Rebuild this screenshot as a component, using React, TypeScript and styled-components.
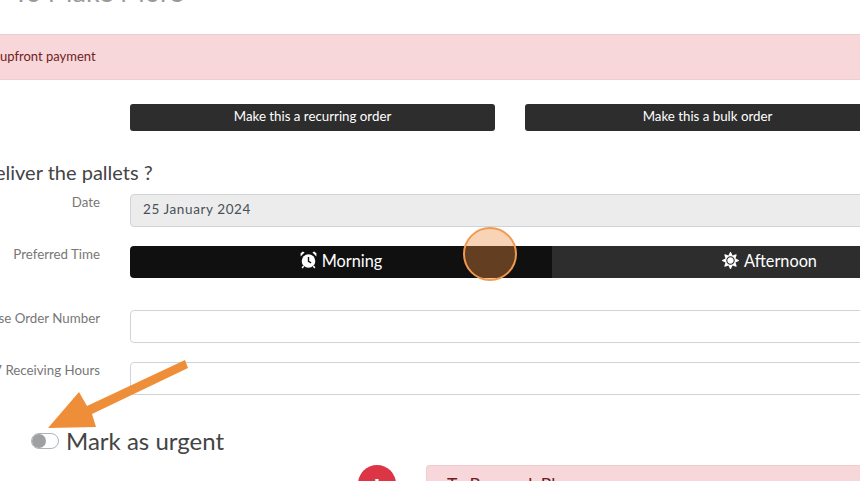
import React from 'react';
import styled, { createGlobalStyle } from 'styled-components';
import { FaSun } from 'react-icons/fa';

const GlobalStyle = createGlobalStyle`
  html, body {
    margin: 0;
    padding: 0;
    width: 860px;
    height: 481px;
    overflow: hidden;
    background: #fff;
    font-family: "Lato", "Liberation Sans", sans-serif;
  }
`;

const Page = styled.div`
  position: relative;
  width: 860px;
  height: 481px;
  overflow: hidden;
  display: flex;
  flex-direction: column;

  & > * {
    flex: none;
  }
`;

const PageTitle = styled.h2`
  margin: -20px 0 0 13px;
  height: 34px;
  font-size: 27px;
  font-weight: 400;
  line-height: 24px;
  color: #999;
  white-space: nowrap;
`;

const Alert = styled.div`
  box-sizing: border-box;
  margin: 20px -10px 0 -10px;
  height: 46px;
  background: #f8d7da;
  border: 1px solid #f1ccd0;
  color: #721c24;
  font-size: 13px;
  line-height: 42px;
  white-space: nowrap;
`;

const AlertText = styled.span`
  margin-left: 9px;
`;

const ButtonRow = styled.div`
  display: flex;
  gap: 30px;
  margin: 24px 0 0 130px;
`;

const OrderButton = styled.div`
  flex: none;
  width: 365px;
  height: 27px;
  background: #2d2d2d;
  border-radius: 3px;
  color: #fff;
  font-size: 13.3px;
  line-height: 25px;
  text-align: center;
`;

const Question = styled.div`
  margin: 28px 0 0 -5px;
  height: 26px;
  font-size: 20px;
  line-height: 26px;
  color: #444;
  white-space: nowrap;
`;

const FormRow = styled.div<{ $top: number }>`
  display: flex;
  margin-top: ${({ $top }) => $top}px;
  height: 33px;
`;

const RowLabel = styled.div`
  flex: none;
  display: flex;
  justify-content: flex-end;
  width: 100px;
  margin-right: 30px;
  font-size: 13.3px;
  line-height: 16px;
  color: #777;
  white-space: nowrap;
`;

const TextField = styled.div<{ $disabled?: boolean }>`
  box-sizing: border-box;
  flex: none;
  width: 760px;
  height: 33px;
  border: 1px solid #ced4da;
  border-radius: 4px;
  background: ${({ $disabled }) => ($disabled ? '#ececec' : '#fff')};
  color: #495057;
  font-size: 13.5px;
  letter-spacing: 0.6px;
  line-height: 29px;
  padding-left: 12px;
`;

const TimeToggle = styled.div`
  display: flex;
  flex: none;
  height: 32px;
  border-radius: 4px;
  overflow: hidden;
`;

const TimeOption = styled.div<{ $active?: boolean; $width: number }>`
  box-sizing: border-box;
  flex: none;
  width: ${({ $width }) => $width}px;
  display: flex;
  align-items: center;
  justify-content: center;
  gap: 5px;
  padding-bottom: 4px;
  color: #fff;
  font-size: 16.3px;
  background: ${({ $active }) => ($active ? '#101010' : '#2d2d2d')};
`;

const UrgentRow = styled.div`
  display: flex;
  align-items: center;
  gap: 7px;
  margin: 31px 0 0 31px;
  height: 30px;
`;

const Switch = styled.div`
  box-sizing: border-box;
  width: 28px;
  height: 16px;
  border: 1px solid #adb5bd;
  border-radius: 8px;
  background: #fff;
`;

const SwitchKnob = styled.div`
  width: 14px;
  height: 14px;
  border-radius: 50%;
  background: #a0a0a0;
`;

const UrgentLabel = styled.div`
  font-size: 24px;
  line-height: 30px;
  color: #444;
`;

const BottomRow = styled.div`
  display: flex;
  align-items: flex-start;
  gap: 30px;
  margin: 9px 0 0 358px;
`;

const DangerBadge = styled.div`
  flex: none;
  width: 38px;
  height: 38px;
  border-radius: 50%;
  background: #dc3545;
  color: #fff;
  text-align: center;
  font-size: 26px;
  font-weight: 700;
  line-height: 46px;
`;

const BottomAlert = styled.div`
  box-sizing: border-box;
  flex: none;
  width: 460px;
  height: 50px;
  background: #f8d7da;
  border: 1px solid #f1ccd0;
  border-radius: 3px;
  color: #721c24;
  font-size: 17.5px;
  line-height: 38px;
  padding-left: 20px;
  white-space: nowrap;
`;

const ClickRing = styled.div`
  position: absolute;
  left: 463px;
  top: 227px;
  box-sizing: border-box;
  width: 54px;
  height: 54px;
  border-radius: 50%;
  border: 2px solid #f09a50;
  background: rgba(240, 140, 60, 0.38);
`;

const Arrow = styled.svg`
  position: absolute;
  left: 0;
  top: 0;
`;

const AlarmIcon = () => (
  <svg width="17" height="18" viewBox="0 0 17 18" aria-hidden>
    <circle cx="8.5" cy="10" r="6.8" fill="#fff" />
    <path d="M8.5 6v4.4l2.6 1.5" stroke="#101010" strokeWidth="1.4" fill="none" />
    <path d="M0.6 5.4 4.6 1.6 2.6 0.6 0.6 2.4z" fill="#fff" />
    <path d="M16.4 5.4 12.4 1.6 14.4 0.6 16.4 2.4z" fill="#fff" />
    <path d="M3.6 15 2.2 17M13.4 15 14.8 17" stroke="#fff" strokeWidth="1.5" />
  </svg>
);

export default function App() {
  return (
    <Page>
      <GlobalStyle />
      <PageTitle>To Make More</PageTitle>
      <Alert>
        <AlertText>upfront payment</AlertText>
      </Alert>
      <ButtonRow>
        <OrderButton>Make this a recurring order</OrderButton>
        <OrderButton>Make this a bulk order</OrderButton>
      </ButtonRow>
      <Question>eliver the pallets ?</Question>
      <FormRow $top={9}>
        <RowLabel>Date</RowLabel>
        <TextField $disabled>25 January 2024</TextField>
      </FormRow>
      <FormRow $top={19}>
        <RowLabel>Preferred Time</RowLabel>
        <TimeToggle>
          <TimeOption $active $width={422}>
            <AlarmIcon />
            Morning
          </TimeOption>
          <TimeOption $width={435}>
            <FaSun size={17} />
            Afternoon
          </TimeOption>
        </TimeToggle>
      </FormRow>
      <FormRow $top={31}>
        <RowLabel>Purchase Order Number</RowLabel>
        <TextField />
      </FormRow>
      <FormRow $top={19}>
        <RowLabel>24/7 Receiving Hours</RowLabel>
        <TextField />
      </FormRow>
      <UrgentRow>
        <Switch>
          <SwitchKnob />
        </Switch>
        <UrgentLabel>Mark as urgent</UrgentLabel>
      </UrgentRow>
      <BottomRow>
        <DangerBadge>!</DangerBadge>
        <BottomAlert>To Proceed, Please</BottomAlert>
      </BottomRow>
      <ClickRing />
      <Arrow width="860" height="481" viewBox="0 0 860 481" aria-hidden>
        <path d="M185 360 188 368 92 414 96 427 48 428 79 392 87 406z" fill="#ef8e38" />
      </Arrow>
    </Page>
  );
}
